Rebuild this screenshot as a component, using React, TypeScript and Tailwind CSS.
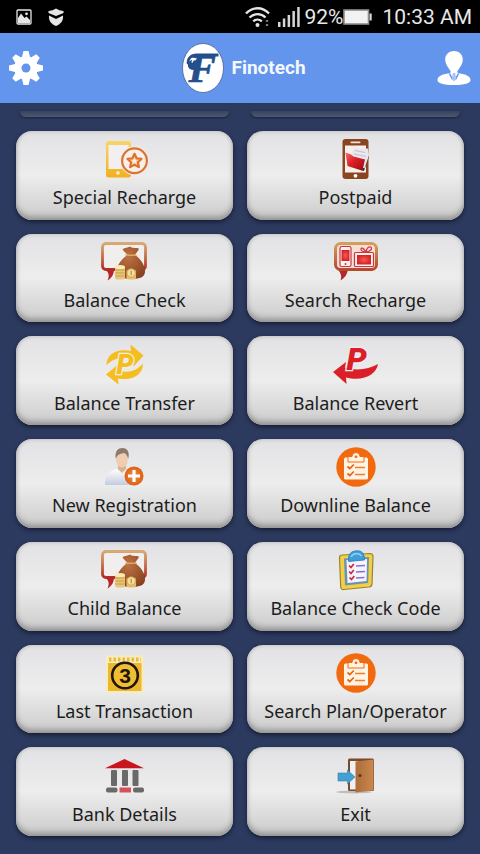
import type { JSX, ReactNode } from "react";

type IconFrameProps = { children: ReactNode };

const IconFrame = ({ children }: IconFrameProps): JSX.Element => (
  <svg className="size-10 overflow-visible" viewBox="0 0 40 40" fill="none" aria-hidden="true">
    {children}
  </svg>
);

const SpecialRechargeIcon = (): JSX.Element => (
  <IconFrame>
    <defs>
      <linearGradient id="special-phone" x1="0" y1="0" x2="0" y2="1">
        <stop offset="0%" stopColor="#f8d568" />
        <stop offset="100%" stopColor="#f2b01f" />
      </linearGradient>
    </defs>
    <rect x="1" y="2" width="25" height="36.5" rx="2.5" fill="url(#special-phone)" />
    <rect x="3.5" y="6" width="20" height="24" fill="#f1eff0" />
    <circle cx="13" cy="34" r="1.8" fill="#fff3cf" />
    <circle cx="29.5" cy="21.7" r="14.5" fill="#efedee" />
    <circle cx="29.5" cy="21.7" r="12.4" fill="#f8efe8" stroke="#dc7330" strokeWidth="2.2" />
    <path
      d="M29.5 14.8l2.1 4.5 4.9.6-3.6 3.3 1 4.9-4.4-2.4-4.4 2.4 1-4.9-3.6-3.3 4.9-.6z"
      fill="#fbd9b8"
      stroke="#e0702a"
      strokeWidth="2.2"
      strokeLinejoin="round"
    />
    <circle cx="29.5" cy="22" r="1.5" fill="#fff6ea" />
  </IconFrame>
);

const PostpaidIcon = (): JSX.Element => (
  <IconFrame>
    <defs>
      <linearGradient id="postpaid-folder" x1="0" y1="0" x2="1" y2="1">
        <stop offset="0%" stopColor="#f4686a" />
        <stop offset="45%" stopColor="#dd1f26" />
        <stop offset="100%" stopColor="#8f0c12" />
      </linearGradient>
    </defs>
    <rect x="6.5" y="0" width="26" height="40" rx="3" fill="#8a4420" />
    <rect x="9" y="6.5" width="21" height="27" fill="#f6efeb" />
    <rect x="14.5" y="2.6" width="10" height="1.6" rx=".8" fill="#f3e3da" />
    <circle cx="19.5" cy="36.8" r="1.9" fill="#fff" />
    <path d="M31 16l2.2.8-5.2 15.2-3-1z" fill="#3b2430" />
    <path d="M16 12.5l3.5-4 5 1.5 7.5-.5 1 7-4.5 13-12-5z" fill="#e9e6ee" />
    <path d="M19 11.5l10 2M18 15l12 2.5" stroke="#b9b4c4" strokeWidth=".8" />
    <path d="M9.5 13.5l5.5 2 2.5 2 11.5 3-2.6 11.2L11.5 27z" fill="url(#postpaid-folder)" />
  </IconFrame>
);

type MoneyBagIconProps = { id: string };

const MoneyBagIcon = ({ id }: MoneyBagIconProps): JSX.Element => (
  <IconFrame>
    <defs>
      <linearGradient id={`${id}-frame`} x1="0" y1="0" x2="0" y2="1">
        <stop offset="0%" stopColor="#d9a877" />
        <stop offset="60%" stopColor="#c0633f" />
        <stop offset="100%" stopColor="#b32a26" />
      </linearGradient>
      <radialGradient id={`${id}-bag`} cx=".4" cy=".3" r=".8">
        <stop offset="0%" stopColor="#bd7444" />
        <stop offset="100%" stopColor="#84401c" />
      </radialGradient>
    </defs>
    <path d="M0 27h9c0 5-2 9-6.5 11.500C4.500 34 4 31 1 28z" fill="#b8232a" />
    <rect x="-2.5" y="1.5" width="43" height="26" rx="3.5" fill="#f1efee" stroke={`url(#${id}-frame)`} strokeWidth="2.8" />
    <path
      d="M17.500 7c3-1.500 5-1 7.500-2.500 3 2.500 6 .5 9 2.200-1 2.300-2.800 4-4 6.300 6 4 10.500 11 10 17-.5 5-5 7-13 7-9 0-15-2-15-8 0-6 4.500-12 10.500-16-1.500-2-4-3.500-5-6z"
      fill={`url(#${id}-bag)`}
    />
    <path d="M21 13.200h10" stroke="#e0a562" strokeWidth="1.6" strokeLinecap="round" />
    <rect x="10" y="24" width="10" height="13.5" rx="2" fill="#e8c878" />
    <path d="M10.500 28h9M10.500 31h9M10.500 34h9" stroke="#b98a3c" strokeWidth=".7" />
    <ellipse cx="15" cy="25" rx="5" ry="2" fill="#fbeab4" />
    <rect x="21.5" y="27.5" width="9.5" height="10" rx="2" fill="#e5c06c" />
    <circle cx="26.2" cy="31" r="4.2" fill="#f6df9c" stroke="#c79a48" strokeWidth=".8" />
    <path d="M26.200 28.800v4.500" stroke="#b98a3c" strokeWidth="1.2" />
  </IconFrame>
);

const SearchRechargeIcon = (): JSX.Element => (
  <IconFrame>
    <defs>
      <linearGradient id="search-frame" x1="0" y1="0" x2="0" y2="1">
        <stop offset="0%" stopColor="#d3a05a" />
        <stop offset="100%" stopColor="#b5482e" />
      </linearGradient>
      <radialGradient id="search-screen">
        <stop offset="0%" stopColor="#fa5b50" />
        <stop offset="100%" stopColor="#d5222b" />
      </radialGradient>
    </defs>
    <path d="M2 27h10c-.5 5-3 9-7.500 11.500 1.500-4 .5-7-2.500-11z" fill="#b3282a" />
    <rect x="-.5" y="1.5" width="41" height="26" rx="5" fill="#f7dcd8" stroke="url(#search-frame)" strokeWidth="3" />
    <rect x="4" y="4.5" width="11" height="20" rx="1.8" fill="#fff0ee" stroke="#c9373c" strokeWidth="1.2" />
    <rect x="5.5" y="8" width="8" height="11" fill="url(#search-screen)" />
    <circle cx="9.5" cy="22" r="1" fill="#c9373c" />
    <rect x="18.5" y="10.5" width="19" height="14" rx="1" fill="#fff0ee" stroke="#c9373c" strokeWidth="1.2" />
    <rect x="21" y="13" width="14" height="9.5" fill="url(#search-screen)" />
    <path
      d="M30 10c-3-5-5-4.500-5-2.800 0 1.600 2 2.600 5 2.800zm0 0c1-6 5-6 5.500-4 .3 1.800-2 3.500-5.500 4z"
      stroke="#c9373c"
      strokeWidth="1.2"
    />
  </IconFrame>
);

const BalanceTransferIcon = (): JSX.Element => (
  <IconFrame>
    <path d="M1.500 20C1.500 9 12 3 26 6L25.500-.5 38.500 10.500 28.500 21.500l-.6-6C17 11 9 13 1.500 20z" fill="#f4bd20" />
    <path d="M38 18.500c0 11-10 17.500-25 15l.5 6L1 29.500 13 19.500l.3 6c10 3 18 .5 24.700-7z" fill="#f4bd20" />
    <text
      x="20"
      y="29"
      textAnchor="middle"
      fontSize="27"
      className="font-['Roboto',sans-serif] font-black italic"
      fill="#f4bd20"
      stroke="#f4efe2"
      strokeWidth="2.5"
      paintOrder="stroke"
    >
      P
    </text>
  </IconFrame>
);

const BalanceRevertIcon = (): JSX.Element => (
  <IconFrame>
    <path d="M-3 27L10 17l-1 5.700c12 3.300 24 1.600 33-3.700-1.500 10-14 18-32 13.500l.5 6.500z" fill="#da1f28" />
    <text
      x="20.5"
      y="25"
      textAnchor="middle"
      fontSize="32"
      className="font-['Roboto',sans-serif] font-black italic"
      fill="#da1f28"
      stroke="#f3eeee"
      strokeWidth="2.5"
      paintOrder="stroke"
    >
      P
    </text>
  </IconFrame>
);

const NewRegistrationIcon = (): JSX.Element => (
  <IconFrame>
    <defs>
      <linearGradient id="registration-body" x1="0" y1="0" x2="0" y2="1">
        <stop offset="0%" stopColor="#ffffff" />
        <stop offset="100%" stopColor="#c4cbe0" />
      </linearGradient>
      <radialGradient id="registration-badge">
        <stop offset="0%" stopColor="#f3913f" />
        <stop offset="100%" stopColor="#dc5f16" />
      </radialGradient>
    </defs>
    <path d="M0 38c0-8 2-13 11-16l6 3 6-3c5 2 7 5 7 16z" fill="url(#registration-body)" />
    <path d="M13 17h8v5l-4 4-4-4z" fill="#dcb08c" />
    <ellipse cx="17" cy="12.5" rx="5.8" ry="8" fill="#efcdb0" />
    <path d="M10.800 12C9.500 4 13 1 17.500 1c5 0 7.500 4 5.700 11-1-3.500-2-5.500-4-6-3 .5-6.400.5-8.400 6z" fill="#8d7a6b" />
    <circle cx="29" cy="29" r="9.5" fill="url(#registration-badge)" />
    <path d="M29 23v12M23 29h12" stroke="#fff" strokeWidth="3.2" />
  </IconFrame>
);

const ClipboardCircleIcon = (): JSX.Element => (
  <IconFrame>
    <circle cx="20" cy="20" r="19.7" fill="#f26a0f" />
    <rect x="8" y="10.5" width="24" height="22" rx="1.5" fill="#fff3e4" />
    <path d="M12 15V9.500h4a4 4 0 0 1 8 0h4V15z" fill="#fff3e4" stroke="#f26a0f" strokeWidth="1" />
    <circle cx="20" cy="9.8" r="1.4" fill="#f26a0f" />
    <path d="M11.500 19.500l2.300 2 4-4M11.500 26.500l2.300 2 4-4" stroke="#e4650f" strokeWidth="1.7" />
    <path d="M19 20.500h10M19 27.500h10" stroke="#ee7d2c" strokeWidth="1.6" />
  </IconFrame>
);

const CheckCodeIcon = (): JSX.Element => (
  <IconFrame>
    <path
      d="M6 5l28-1.500q3 0 3 3l-1 27.500q0 2.500-3 3L8 39.500q-3 .5-3.300-2.500L3.500 8q0-3 2.500-3z"
      fill="#f3cf42"
      stroke="#9a8236"
      strokeWidth="1.2"
    />
    <path d="M8 8.500l25-1.500-.8 26L9 35.500z" fill="#6b93b8" />
    <path d="M10.500 10l20.500-1-.5 22-19 2z" fill="#f7f4fc" />
    <path d="M12.500 11.500C12 5 14 1.500 20 .8c6-.5 8.500 2.500 8.500 9.200z" fill="#3d9edb" stroke="#2b79b4" strokeWidth=".8" />
    <path d="M15 7c2-4 8-4.500 10.500-1" stroke="#8bd2f3" strokeWidth="1.6" />
    <path d="M13 15.500l2 2 2.800-3.600M13 21.500l2 2 2.800-3.600M13.500 27.500l2 2 2.800-3.600" stroke="#cf2843" strokeWidth="1.7" />
    <path d="M20 16l9-.4M20 22l9-.4M20 28l8.500-.4" stroke="#7f74d6" strokeWidth="1.5" />
  </IconFrame>
);

const LastTransactionIcon = (): JSX.Element => (
  <IconFrame>
    <rect x="1" y="2.5" width="37.5" height="37.5" rx="1.5" fill="#f8ecbb" />
    <path d="M3 10h33.500v28H3z" fill="#edb72d" />
    <path d="M4 6.500h32" stroke="#e8b93c" strokeWidth="4" strokeDasharray="2.5 2" />
    <circle cx="20" cy="22.5" r="12.8" fill="#f0bd36" stroke="#1f1704" strokeWidth="2.6" />
    <text x="20" y="30" textAnchor="middle" fontSize="21" className="font-['Liberation_Sans',sans-serif] font-bold" fill="#1f1704">
      3
    </text>
  </IconFrame>
);

const BankIcon = (): JSX.Element => (
  <IconFrame>
    <path d="M0 12.300L19.500 3 39 12.300z" fill="#c9161c" />
    <g fill="#696969">
      <rect x="6" y="14" width="6" height="16" rx="1" />
      <rect x="17" y="14" width="6" height="16" rx="1" />
      <rect x="27.5" y="14" width="6" height="16" rx="1" />
      <rect x="1" y="31.5" width="11.5" height="5" rx="2" />
      <rect x="28" y="31.5" width="11" height="5" rx="2" />
    </g>
    <rect x="14.5" y="31.5" width="11.5" height="5" rx=".5" fill="#d5525c" />
  </IconFrame>
);

const ExitIcon = (): JSX.Element => (
  <IconFrame>
    <defs>
      <linearGradient id="exit-door" x1="0" y1="0" x2="1" y2="0">
        <stop offset="0%" stopColor="#ad6c39" />
        <stop offset="100%" stopColor="#c9884e" />
      </linearGradient>
    </defs>
    <ellipse cx="18" cy="36" rx="18" ry="1.5" fill="#bdbdbd" />
    <rect x="12" y="2.5" width="26" height="32.5" rx="1.5" fill="#7c4a29" />
    <rect x="14" y="5" width="8" height="28.5" fill="#edf0f3" />
    <path d="M19.500 5.500L37.500 3.500v31l-18 2z" fill="url(#exit-door)" />
    <circle cx="24" cy="19.5" r="1.5" fill="#5a3115" />
    <path d="M2 17h9.500V14l7.500 7-7.500 7v-3H2z" fill="#45a0d2" stroke="#3682ad" strokeWidth=".6" />
  </IconFrame>
);

const FinotechLogo = (): JSX.Element => (
  <svg className="h-[50px] w-[42px]" viewBox="0 0 42 50" fill="none" aria-hidden="true">
    <ellipse cx="21" cy="25" rx="20.5" ry="24.5" fill="#fff" stroke="#47618f" strokeWidth=".8" />
    <text
      x="6.5"
      y="38.5"
      fontSize="41"
      className="font-['Liberation_Serif',serif] font-bold italic"
      fill="#23508c"
      stroke="#23508c"
      strokeWidth=".6"
    >
      F
    </text>
    {/* swash to the left of the letter */}
    <path d="M36.500 12H15C8.500 12 5.300 16 6.300 21" stroke="#23508c" strokeWidth="2.8" />
    <circle cx="10.8" cy="22" r="5" fill="#23508c" />
    <path d="M10 19.500c.5-2.500 2-3.500 4.500-3.800" stroke="#fff" strokeWidth="1.4" />
  </svg>
);

const GearIcon = (): JSX.Element => (
  <svg className="size-[34px]" viewBox="-17 -17 34 34" aria-hidden="true">
    <g fill="#fff">
      {[0, 45, 90, 135].map((angle) => (
        <path key={angle} d="M-4-11L-2.500-17h5L4-11v22l-1.500 6h-5L-4 11z" transform={`rotate(${angle})`} />
      ))}
      <circle r="11.8" />
    </g>
    <circle r="4.5" fill="#6495ec" />
  </svg>
);

const ProfileIcon = (): JSX.Element => (
  <svg className="size-[34px]" viewBox="0 0 34 34" fill="#fff" aria-hidden="true">
    <path d="M17 0c5.600 0 9 4 8.800 9-.2 4-2.800 7.500-5.300 11-.6 1.500 0 2 1.500 2.300C29 23.200 33.500 25.500 33.500 29c0 3.500-6 5-16.500 5S.5 32.500.5 29c0-3.500 4.500-5.800 11.500-6.700 1.500-.3 2.100-.8 1.500-2.300-2.500-3.500-5.100-7-5.300-11C8 4 11.400 0 17 0z" />
    <path d="M12.500 22.500l3 6M21.500 22.500l-3 6" stroke="#6495ec" strokeWidth="1.6" />
    <path d="M15.800 22h2.400l1 6-2.200 2.500-2.200-2.500z" fill="#a9c4f5" />
  </svg>
);

const StatusBar = (): JSX.Element => (
  <div className="flex h-[33px] items-center justify-between bg-black pr-2 pl-4 font-['Roboto',sans-serif] text-[21px] leading-6 text-[#e8e8e8]">
    <div className="flex items-center gap-4">
      <svg className="size-4" viewBox="0 0 16 16" aria-hidden="true">
        <rect x="1" y="1" width="14" height="14" rx="1" fill="none" stroke="#e6e6e6" strokeWidth="1.3" />
        <path d="M2 9l3-4.500L8.500 9l2-1.500L14 11v3H2z" fill="#e6e6e6" />
        <circle cx="10.5" cy="4.8" r="1.4" fill="#e6e6e6" />
      </svg>
      <svg className="h-[18px] w-4" viewBox="0 0 16 18" fill="#e6e6e6" aria-hidden="true">
        <path d="M.5 3Q5 2.500 8 .5q3 2 7.500 2.500v2L8 8 .5 5z" />
        <path d="M1 7.500L8 11l7-3.500c.5 5-2 8.500-7 10.500-5-2-7.500-5.500-7-10.500z" />
      </svg>
    </div>
    <div className="flex items-center">
      <svg className="mr-2 h-[22px] w-[25px]" viewBox="0 0 25 22" fill="none" stroke="#e6e6e6" strokeWidth="2.3" aria-hidden="true">
        <path d="M1 7.500C7.500.5 17.500.5 24 7.500M4.500 11.500c4.500-4.500 11.500-4.500 16 0M8.300 15.300c2.500-2.300 6-2.300 8.500 0" />
        <circle cx="12.5" cy="19" r="2" fill="#e6e6e6" stroke="none" />
        <path d="M22 14v2M22 18v2" stroke="#777" />
      </svg>
      <svg className="mr-1 h-5 w-[22px]" viewBox="0 0 22 20" fill="#d6d6d6" aria-hidden="true">
        <rect x="0" y="15" width="2.5" height="5" />
        <rect x="4.8" y="11.5" width="2.5" height="8.5" />
        <rect x="9.6" y="8" width="2.5" height="12" />
        <rect x="14.4" y="4" width="2.5" height="16" />
        <rect x="19.2" y="0" width="2.5" height="20" />
      </svg>
      <span>92%</span>
      <svg className="mr-2.5 h-4 w-[29px]" viewBox="0 0 29 16" aria-hidden="true">
        <rect x="1" y="1" width="24.5" height="14" fill="#f2f2f2" stroke="#8d8d8d" strokeWidth="1.6" />
        <rect x="26.5" y="4.5" width="2.2" height="7" fill="#d8d8d8" />
      </svg>
      <span>10:33 AM</span>
    </div>
  </div>
);

const Header = (): JSX.Element => (
  <header className="grid h-[70px] grid-cols-[1fr_auto_1fr] items-center bg-[#6495ec] px-[9px]">
    <button type="button" aria-label="Settings" className="justify-self-start">
      <GearIcon />
    </button>
    <div className="flex items-center gap-[7px] pl-2">
      <FinotechLogo />
      <h1 className="font-['Roboto',sans-serif] text-[19px] leading-6 font-bold text-[#f4f8ff]">Finotech</h1>
    </div>
    <button type="button" aria-label="Profile" className="justify-self-end">
      <ProfileIcon />
    </button>
  </header>
);

const MENU_ITEMS = [
  { label: "Special Recharge", icon: <SpecialRechargeIcon /> },
  { label: "Postpaid", icon: <PostpaidIcon /> },
  { label: "Balance Check", icon: <MoneyBagIcon id="balance" /> },
  { label: "Search Recharge", icon: <SearchRechargeIcon /> },
  { label: "Balance Transfer", icon: <BalanceTransferIcon /> },
  { label: "Balance Revert", icon: <BalanceRevertIcon /> },
  { label: "New Registration", icon: <NewRegistrationIcon /> },
  { label: "Downline Balance", icon: <ClipboardCircleIcon /> },
  { label: "Child Balance", icon: <MoneyBagIcon id="child" /> },
  { label: "Balance Check Code", icon: <CheckCodeIcon /> },
  { label: "Last Transaction", icon: <LastTransactionIcon /> },
  { label: "Search Plan/Operator", icon: <ClipboardCircleIcon /> },
  { label: "Bank Details", icon: <BankIcon /> },
  { label: "Exit", icon: <ExitIcon /> },
];

/** Faded bottom edge of the row that is scrolled under the header */
const ScrolledRow = (): JSX.Element => (
  <div className="grid h-4 grid-cols-2 gap-[14px] overflow-hidden px-4 pt-2" aria-hidden="true">
    <div className="mx-1 h-1.5 rounded-b-2xl bg-linear-to-b from-[#364261] to-[#50586f] shadow-[0_1px_3px_#1b2440]" />
    <div className="mx-1 h-1.5 rounded-b-2xl bg-linear-to-b from-[#364261] to-[#50586f] shadow-[0_1px_3px_#1b2440]" />
  </div>
);

export default function App(): JSX.Element {
  return (
    <div className="flex min-h-screen flex-col bg-[#2b3a5e]">
      <StatusBar />
      <Header />
      <ScrolledRow />
      <main className="grid flex-1 auto-rows-fr grid-cols-2 gap-[14px] px-4 pt-3 pb-[18px]">
        {MENU_ITEMS.map(({ label, icon }) => (
          <button
            key={label}
            type="button"
            className="flex flex-col items-center justify-center gap-1 rounded-2xl bg-linear-to-b from-[#e2e2e5] via-[#ededed] via-50% to-[#cbcbcb] shadow-[0_2px_4px_#161d33,inset_0_-5px_6px_-2px_#8f8f8f,inset_0_0_4px_#b4b4b4]"
          >
            {icon}
            <span className="font-['Noto_Sans',sans-serif] text-lg leading-7 text-[#1c1c1c]">{label}</span>
          </button>
        ))}
      </main>
    </div>
  );
}
